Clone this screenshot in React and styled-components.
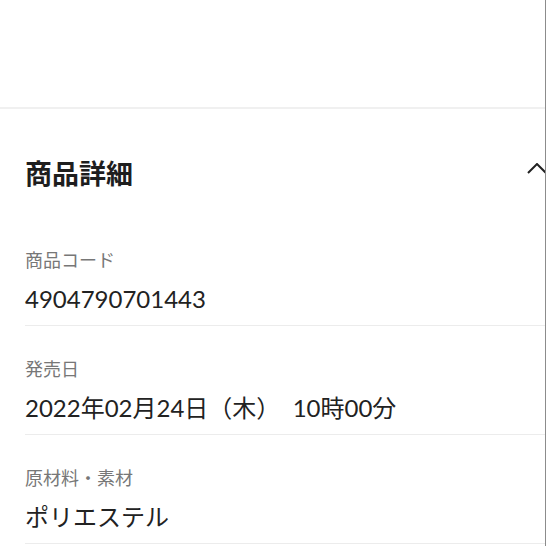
import React from "react";
import styled, { createGlobalStyle } from "styled-components";

const GlobalStyle = createGlobalStyle`
  body {
    margin: 0;
    background: #fff;
    font-family: Lato, "Noto Sans CJK JP", sans-serif;
  }
`;

const items = [
  { label: "商品コード", value: "4904790701443" },
  { label: "発売日", value: "2022年02月24日（木）\u00a0 10時00分" },
  { label: "原材料・素材", value: "ポリエステル" },
];

function App() {
  return (
    <Page>
      <GlobalStyle />
      <TopSpace />
      <Section>
        <Header>
          <Title>商品詳細</Title>
          <Chevron viewBox="0 0 20 20">
            <polyline points="1,10 10,1 19,10" />
          </Chevron>
        </Header>
        <List>
          {items.map((item) => (
            <Item key={item.label}>
              <Label>{item.label}</Label>
              <Value>{item.value}</Value>
            </Item>
          ))}
        </List>
      </Section>
    </Page>
  );
}

export default App;

const Page = styled.div`
  width: 546px;
  height: 546px;
  box-sizing: border-box;
  overflow: hidden;
  border-right: 1px solid #8c8c8c;
  background: #fff;
`;

const TopSpace = styled.div`
  height: 107px;
  border-bottom: 2px solid #f0f0f0;
`;

const Section = styled.section`
  padding-left: 25px;
`;

const Header = styled.div`
  display: flex;
  align-items: center;
  justify-content: space-between;
  padding: 44px 0 24px;
`;

const Title = styled.h2`
  margin: 0;
  font-family: "Noto Sans CJK JP", sans-serif;
  font-size: 27px;
  line-height: 40px;
  font-weight: 700;
  color: #1e1e1e;
`;

const Chevron = styled.svg`
  flex-shrink: 0;
  width: 20px;
  height: 20px;
  margin-right: -2px;
  fill: none;
  stroke: #222;
  stroke-width: 2;
`;

const List = styled.div`
  display: flex;
  flex-direction: column;
`;

const Item = styled.div`
  padding: 30px 0 10px;
  border-bottom: 1px solid #ececec;
`;

const Label = styled.div`
  font-family: "Noto Sans CJK JP", sans-serif;
  font-size: 18px;
  line-height: 24px;
  color: #777;
  margin-bottom: 12px;
`;

const Value = styled.div`
  font-family: Lato, "Noto Sans CJK JP", sans-serif;
  font-size: 24px;
  line-height: 32px;
  color: #222;
`;
